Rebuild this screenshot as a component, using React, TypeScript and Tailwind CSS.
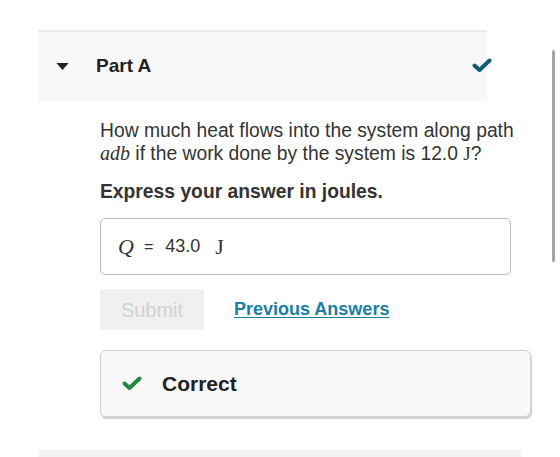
import React from "react";

const SANS = { fontFamily: '"Liberation Sans", Arial, sans-serif' };

function Check({ className }: { className?: string }) {
  return (
    <svg viewBox="0 0 20 15" className={className} fill="none">
      <path
        d="M2.5 7.5 L7.5 12 L17.5 2.5"
        stroke="currentColor"
        strokeWidth="4"
        strokeLinecap="round"
        strokeLinejoin="round"
      />
    </svg>
  );
}

function MathI({ children }: { children: React.ReactNode }) {
  return (
    <span className="italic" style={{ fontFamily: '"Liberation Serif", "DejaVu Serif", serif' }}>
      {children}
    </span>
  );
}

function MathR({ children }: { children: React.ReactNode }) {
  return <span style={{ fontFamily: '"Liberation Serif", "DejaVu Serif", serif' }}>{children}</span>;
}

export default function App() {
  return (
    <div className="relative h-[457px] w-[560px] overflow-hidden bg-white text-[#333]" style={SANS}>
      {/* scrollbar */}
      <div className="absolute left-[552px] top-[50px] h-[212px] w-[3px] rounded-full bg-[#a6a6a6]" />

      <div className="pl-[38px] pt-[30px]">
        {/* Part header */}
        <div className="flex h-[71px] w-[449px] items-center border-t-2 border-[#e9e9e9] bg-[#f8f8f8]">
          <svg viewBox="0 0 14 8" className="ml-[18px] h-[7px] w-[13px] text-[#222]">
            <path d="M0 0 L14 0 L7 8 Z" fill="currentColor" />
          </svg>
          <span className="ml-[27px] text-[19px] font-bold text-[#222]">Part A</span>
          <Check className="ml-auto mr-[-5px] mb-[2px] h-[15px] w-[20px] text-[#0d5d75]" />
          <div className="w-[0px]" />
        </div>

        {/* body */}
        <div className="pl-[62px]">
          <p className="mt-[18px] text-[19.3px] leading-[23px] text-[#333]">
            How much heat flows into the system along path
            <br />
            <span className="text-[20px]">
              <MathI>adb</MathI>
            </span>{" "}
            if the work done by the system is 12.0 <MathR>J</MathR>?
          </p>
          <p className="mt-[15px] text-[19.3px] font-bold leading-[23px] text-[#333]">
            Express your answer in joules.
          </p>

          <div className="mt-[15px] flex h-[57px] w-[411px] items-center rounded-[5px] border border-[#b9b9b9] pl-[17px] text-[18px] text-[#333]">
            <span className="text-[22px]">
              <MathI>Q</MathI>
            </span>
            <span className="ml-[10px] text-[16px]">=</span>
            <span className="ml-[12px]">43.0</span>
            <span className="ml-[15px] text-[22px]">
              <MathR>J</MathR>
            </span>
          </div>

          <div className="mt-[14px] flex items-center">
            <div className="flex h-[41px] w-[104px] items-center justify-center rounded-[3px] bg-[#f0f0f0] text-[20px] text-[#d2d2d2]">
              Submit
            </div>
            <span className="ml-[30px] text-[18px] font-bold text-[#1a7fa1] underline underline-offset-2">
              Previous Answers
            </span>
          </div>

          <div className="mt-[20px] flex h-[67px] w-[431px] items-center rounded-[6px] border border-[#cfcfcf] bg-[#f9f9f9] shadow-[1px_2px_1px_#cfcfcf]">
            <Check className="ml-[20px] h-[15px] w-[22px] text-[#1f8a3e]" />
            <span className="ml-[19px] text-[21px] font-bold text-[#222]">Correct</span>
          </div>
        </div>

        <div className="mt-[33px] h-[8px] w-[484px] bg-[#f4f4f4]" />
      </div>
    </div>
  );
}
